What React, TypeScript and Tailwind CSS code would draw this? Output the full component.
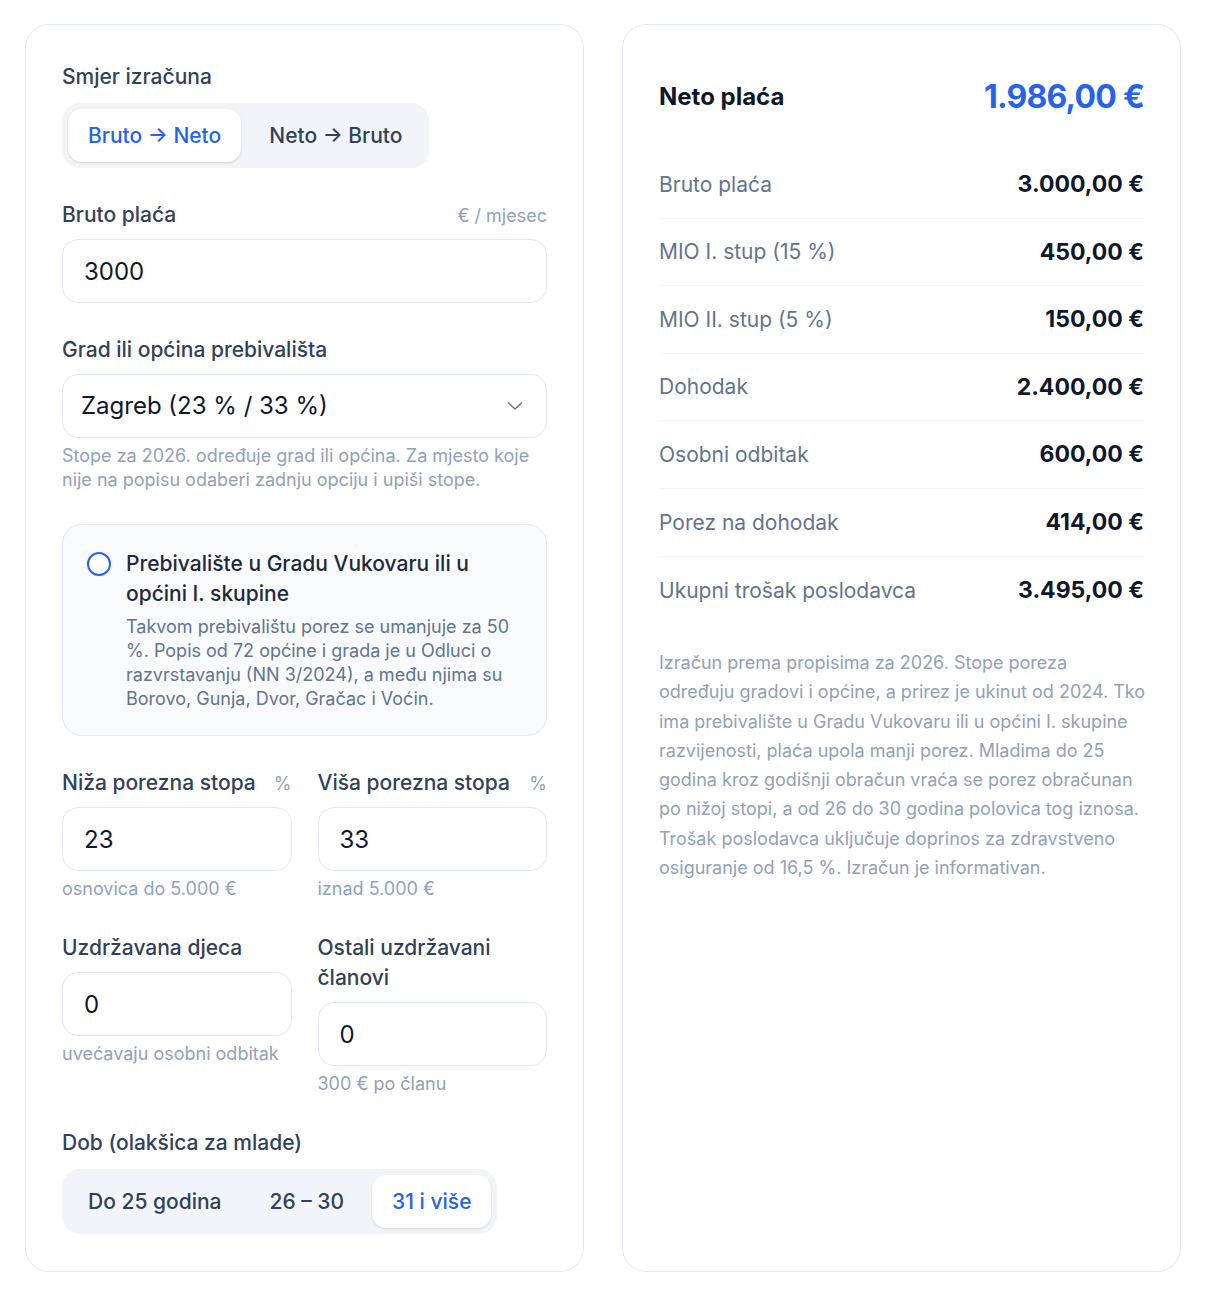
import { useState } from 'react'
import clsx from 'clsx'

const fmt = (n: number) => {
  const [i, d] = Math.abs(n).toFixed(2).split('.')
  return `${n < 0 ? '-' : ''}${i.replace(/\B(?=(\d{3})+(?!\d))/g, '.')},${d} €`
}

const CITIES = [
  { name: 'Zagreb', low: 23, high: 33 },
  { name: 'Split', low: 21.5, high: 31.5 },
  { name: 'Rijeka', low: 22, high: 32 },
  { name: 'Osijek', low: 20, high: 30 },
  { name: 'Drugo mjesto', low: 20, high: 30 },
]

function Label({ children, hint }: { children: React.ReactNode; hint?: string }) {
  return (
    <div className="mb-[9px] flex items-baseline justify-between gap-3">
      <span className="text-[21px] leading-[30px] font-medium text-slate-700">{children}</span>
      {hint && <span className="text-[18px] text-slate-400">{hint}</span>}
    </div>
  )
}

function Help({ children }: { children: React.ReactNode }) {
  return <p className="mt-1.5 text-[18px] leading-6 text-slate-400">{children}</p>
}

function NumberInput({ value, onChange }: { value: string; onChange: (v: string) => void }) {
  return (
    <input
      inputMode="decimal"
      value={value}
      onChange={(e) => onChange(e.target.value)}
      className="h-16 w-full rounded-2xl border border-slate-200 bg-white pl-[21px] pr-4 text-[24px] text-slate-900 outline-none focus:border-[#2563eb]"
    />
  )
}

function Segmented({
  options,
  value,
  onChange,
}: {
  options: string[]
  value: string
  onChange: (v: string) => void
}) {
  return (
    <div className="mt-0.5 inline-flex gap-2 self-start rounded-[18px] bg-slate-100 p-1.5">
      {options.map((o) => (
        <button
          key={o}
          onClick={() => onChange(o)}
          className={clsx(
            'h-[53px] rounded-[14px] px-5 text-[21px] font-medium transition',
            value === o ? 'bg-white text-[#2563eb] shadow-sm' : 'text-slate-700 hover:text-slate-900'
          )}
        >
          {o}
        </button>
      ))}
    </div>
  )
}

export default function App() {
  const [direction, setDirection] = useState('Bruto → Neto')
  const [amount, setAmount] = useState('3000')
  const [city, setCity] = useState('Zagreb')
  const [vukovar, setVukovar] = useState(false)
  const [low, setLow] = useState('23')
  const [high, setHigh] = useState('33')
  const [kids, setKids] = useState('0')
  const [others, setOthers] = useState('0')
  const [age, setAge] = useState('31 i više')

  const bruto = parseFloat(amount.replace(',', '.')) || 0
  const mio1 = bruto * 0.15
  const mio2 = bruto * 0.05
  const dohodak = bruto - mio1 - mio2
  const odbitak = 600 + (parseInt(kids) || 0) * 300 + (parseInt(others) || 0) * 300
  const base = Math.max(0, dohodak - odbitak)
  const lowRate = (parseFloat(low) || 0) / 100
  const highRate = (parseFloat(high) || 0) / 100
  let porez = Math.min(base, 5000) * lowRate + Math.max(0, base - 5000) * highRate
  if (vukovar) porez /= 2
  const neto = dohodak - porez
  const trosak = bruto * 1.165

  const rows = [
    ['Bruto plaća', bruto],
    ['MIO I. stup (15 %)', mio1],
    ['MIO II. stup (5 %)', mio2],
    ['Dohodak', dohodak],
    ['Osobni odbitak', odbitak],
    ['Porez na dohodak', porez],
    ['Ukupni trošak poslodavca', trosak],
  ] as const

  return (
    <div className="min-h-screen bg-white px-[25px] pt-6 pb-[25px] font-[Inter,sans-serif]">
      <div className="grid grid-cols-2 gap-[38px]">
        {/* Inputs */}
        <div className="flex flex-col gap-8 rounded-[24px] border border-slate-200 bg-white px-9 pt-[37px] pb-[37px]">
          <div className="flex flex-col">
            <Label>Smjer izračuna</Label>
            <Segmented options={['Bruto → Neto', 'Neto → Bruto']} value={direction} onChange={setDirection} />
          </div>

          <div>
            <Label hint="€ / mjesec">{direction === 'Bruto → Neto' ? 'Bruto plaća' : 'Neto plaća'}</Label>
            <NumberInput value={amount} onChange={setAmount} />
          </div>

          <div>
            <Label>Grad ili općina prebivališta</Label>
            <div className="relative">
              <select
                value={city}
                onChange={(e) => {
                  const c = CITIES.find((x) => x.name === e.target.value)
                  setCity(e.target.value)
                  if (c) {
                    setLow(String(c.low))
                    setHigh(String(c.high))
                  }
                }}
                className="h-16 w-full appearance-none rounded-2xl border border-slate-200 bg-white pl-[18px] pr-12 text-[24px] text-slate-900 outline-none"
              >
                {CITIES.map((c) => (
                  <option key={c.name} value={c.name}>
                    {c.name} ({String(c.low).replace('.', ',')} % / {String(c.high).replace('.', ',')} %)
                  </option>
                ))}
              </select>
              <svg
                className="pointer-events-none absolute top-1/2 right-6 -translate-y-1/2 text-gray-500"
                width="16"
                height="8"
                viewBox="0 0 16 8"
                fill="none"
                stroke="currentColor"
                strokeWidth="1.5"
                strokeLinecap="round"
                strokeLinejoin="round"
              >
                <path d="M1.5 1l6.5 6 6.5-6" />
              </svg>
            </div>
            <Help>
              Stope za 2026. određuje grad ili općina. Za mjesto koje nije na popisu odaberi zadnju opciju i upiši stope.
            </Help>
          </div>

          <button
            onClick={() => setVukovar(!vukovar)}
            className="flex gap-[15px] rounded-[20px] border border-slate-200 bg-slate-50 p-6 text-left"
          >
            <span className="mt-[3px] flex h-6 w-6 shrink-0 items-center justify-center rounded-full border-2 border-[#2563eb] bg-white">
              {vukovar && <span className="h-3 w-3 rounded-full bg-[#2563eb]" />}
            </span>
            <span className="flex flex-col">
              <span className="text-[21px] leading-[30px] font-medium text-slate-800">
                Prebivalište u Gradu Vukovaru ili u općini I. skupine
              </span>
              <span className="mt-1.5 text-[18px] leading-6 text-slate-500">
                Takvom prebivalištu porez se umanjuje za 50 %. Popis od 72 općine i grada je u Odluci o razvrstavanju (NN
                3/2024), a među njima su Borovo, Gunja, Dvor, Gračac i Voćin.
              </span>
            </span>
          </button>

          <div className="grid grid-cols-2 gap-x-[26px] gap-y-8">
            <div>
              <Label hint="%">Niža porezna stopa</Label>
              <NumberInput value={low} onChange={setLow} />
              <Help>osnovica do 5.000 €</Help>
            </div>
            <div>
              <Label hint="%">Viša porezna stopa</Label>
              <NumberInput value={high} onChange={setHigh} />
              <Help>iznad 5.000 €</Help>
            </div>
            <div>
              <Label>Uzdržavana djeca</Label>
              <NumberInput value={kids} onChange={setKids} />
              <Help>uvećavaju osobni odbitak</Help>
            </div>
            <div>
              <Label>Ostali uzdržavani članovi</Label>
              <NumberInput value={others} onChange={setOthers} />
              <Help>300 € po članu</Help>
            </div>
          </div>

          <div className="flex flex-col">
            <Label>Dob (olakšica za mlade)</Label>
            <Segmented options={['Do 25 godina', '26 – 30', '31 i više']} value={age} onChange={setAge} />
          </div>
        </div>

        {/* Results */}
        <div className="rounded-[24px] border border-slate-200 bg-white px-9 pt-[37px] pb-[37px]">
          <div className="mb-[19px] flex h-[70px] items-center justify-between">
            <span className="text-[24px] font-bold text-slate-900">Neto plaća</span>
            <span className="text-[32px] font-bold tracking-tight text-[#2563eb]">{fmt(neto)}</span>
          </div>

          <div className="flex flex-col">
            {rows.map(([label, val], i) => (
              <div
                key={label}
                className={clsx(
                  'flex h-[67.6px] items-center justify-between',
                  i < rows.length - 1 && 'border-b border-slate-100'
                )}
              >
                <span className="text-[21px] text-slate-500">{label}</span>
                <span className="text-[23px] font-bold text-slate-900">{fmt(val)}</span>
              </div>
            ))}
          </div>

          <p className="mt-6 -mr-[2px] text-[18px] leading-relaxed text-slate-400">
            Izračun prema propisima za 2026. Stope poreza određuju gradovi i općine, a prirez je ukinut od 2024. Tko ima
            prebivalište u Gradu Vukovaru ili u općini I. skupine razvijenosti, plaća upola manji porez. Mladima do 25
            godina kroz godišnji obračun vraća se porez obračunan po nižoj stopi, a od 26 do 30 godina polovica tog iznosa.
            Trošak poslodavca uključuje doprinos za zdravstveno osiguranje od 16,5 %. Izračun je informativan.
          </p>
        </div>
      </div>
    </div>
  )
}
